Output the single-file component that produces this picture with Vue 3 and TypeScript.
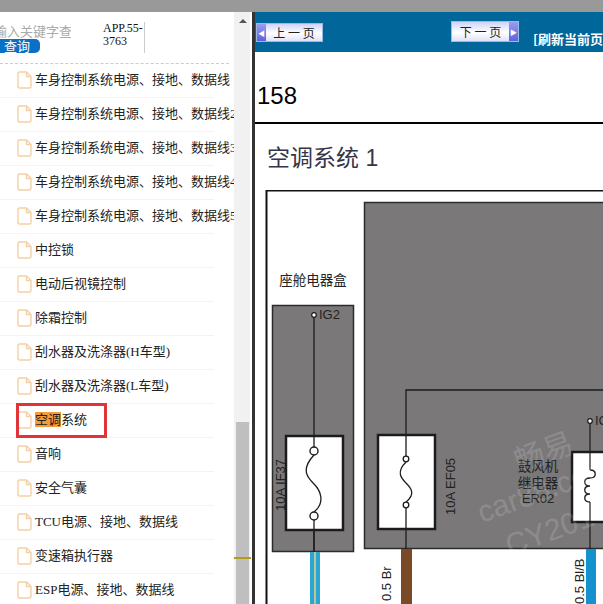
<script setup lang="ts">
const base = '车身控制系统电源、接地、数据线'

const items: string[] = [
  base,
  base + '2',
  base + '3',
  base + '4',
  base + '5',
  '中控锁',
  '电动后视镜控制',
  '除霜控制',
  '刮水器及洗涤器(H车型)',
  '刮水器及洗涤器(L车型)',
  '空调系统',
  '音响',
  '安全气囊',
  'TCU电源、接地、数据线',
  '变速箱执行器',
  'ESP电源、接地、数据线'
]
</script>

<template>
  <div class="screen">
    <div class="topbar"></div>
    <div class="main">
      <aside class="sidebar">
        <div class="search">
          <div class="search-left">
            <input class="keyword" placeholder="请输入关键字查询" />
            <button class="query">查询</button>
          </div>
          <div class="code">APP.55-3763</div>
        </div>
        <ul class="tree">
          <li v-for="item in items" :key="item" class="row">
            <svg class="file" width="15" height="18" viewBox="0 0 15 18">
              <path d="M1 2.500q0-1.500 1.500-1.500h7l4.500 4.500v10q0 1.500-1.500 1.500h-10q-1.500 0-1.500-1.500zM9.500 1v4.500h4.500" fill="#fff" stroke="#f5d0a4" stroke-width="1.400" />
            </svg>
            <span v-if="item === '空调系统'" class="label"><em class="hit">空调</em>系统</span>
            <span v-else class="label">{{ item }}</span>
            <i v-if="item === '空调系统'" class="mark"></i>
          </li>
        </ul>
      </aside>

      <div class="scrollbar">
        <span class="arrow"></span>
        <span class="thumb"></span>
        <span class="tick"></span>
      </div>
      <div class="divider"></div>

      <section class="content">
        <header class="toolbar">
          <button class="page-btn prev"><b class="cap">&#9664;</b><span>上 一 页</span></button>
          <button class="page-btn next"><span>下 一 页</span><b class="cap">&#9654;</b></button>
          <span class="refresh">[刷新当前页]</span>
        </header>
        <div class="page-no">158</div>
        <h1 class="title">空调系统 1</h1>

        <svg class="diagram" width="348" height="414" viewBox="255 190 348 414">
          <rect x="266.500" y="190.500" width="400" height="500" fill="#fff" stroke="#111" stroke-width="2" />

          <rect x="364.500" y="202.500" width="300" height="346" fill="#7b7879" stroke="#2b2b2b" stroke-width="1.500" />
          <rect x="272.500" y="305.500" width="81" height="246" fill="#7b7879" stroke="#2b2b2b" stroke-width="1.500" />

          <text x="313" y="285" class="cn big" text-anchor="middle">座舱电器盒</text>

          <!-- left fuse -->
          <line x1="314" y1="315" x2="314" y2="551" stroke="#1c1c1c" stroke-width="1.300" />
          <circle cx="314" cy="315" r="2.300" fill="#fff" stroke="#1c1c1c" stroke-width="1.200" />
          <text x="319" y="319" class="en">IG2</text>
          <rect x="286" y="436" width="57" height="94" fill="#fff" stroke="#1c1c1c" stroke-width="2.500" />
          <path d="M314 455C300 470 308 478 314 484S326 502 314 512" fill="none" stroke="#1c1c1c" stroke-width="1.300" />
          <circle cx="314" cy="451" r="4" fill="#fff" stroke="#1c1c1c" stroke-width="1.400" />
          <circle cx="314" cy="516" r="4" fill="#fff" stroke="#1c1c1c" stroke-width="1.400" />
          <text transform="translate(285 511) rotate(-90)" class="en">10A IF37</text>
          <rect x="310" y="552" width="10" height="52" fill="#2ba6d3" />
          <rect x="314" y="552" width="2" height="52" fill="#b9c59c" />
          <line x1="314" y1="436" x2="314" y2="447" stroke="#1c1c1c" stroke-width="1.300" />
          <line x1="314" y1="520" x2="314" y2="552" stroke="#1c1c1c" stroke-width="1.300" />

          <!-- middle fuse -->
          <path d="M603 390H406V435" fill="none" stroke="#1c1c1c" stroke-width="1.300" />
          <rect x="378" y="435" width="57" height="94" fill="#fff" stroke="#1c1c1c" stroke-width="2.500" />
          <line x1="406" y1="435" x2="406" y2="456" stroke="#1c1c1c" stroke-width="1.300" />
          <line x1="406" y1="508" x2="406" y2="549" stroke="#1c1c1c" stroke-width="1.300" />
          <path d="M406 462C396 472 401 478 406 483S416 494 406 502" fill="none" stroke="#1c1c1c" stroke-width="1.300" />
          <circle cx="406" cy="459" r="2.800" fill="#fff" stroke="#1c1c1c" stroke-width="1.300" />
          <circle cx="406" cy="505" r="2.800" fill="#fff" stroke="#1c1c1c" stroke-width="1.300" />
          <text transform="translate(455 515) rotate(-90)" class="en pre">10A  EF05</text>
          <rect x="401" y="549" width="11" height="55" fill="#7a4a26" />
          <text transform="translate(391 601) rotate(-90)" class="en">0.5 Br</text>

          <!-- relay -->
          <line x1="590" y1="421" x2="590" y2="549" stroke="#1c1c1c" stroke-width="1.200" />
          <circle cx="590" cy="421" r="2.300" fill="#fff" stroke="#1c1c1c" stroke-width="1.200" />
          <text x="595" y="425" class="en">IG</text>
          <rect x="572" y="452" width="60" height="70" fill="#fff" stroke="#1c1c1c" stroke-width="2.500" />
          <line x1="590" y1="452" x2="590" y2="470" stroke="#1c1c1c" stroke-width="1.200" />
          <path d="M590 470c7 0 7 8 0 8c-7 0-7 8 0 8c-7 0-7 8 0 8c-7 0-7 8 0 8" fill="none" stroke="#1c1c1c" stroke-width="1.300" />
          <line x1="590" y1="502" x2="590" y2="522" stroke="#1c1c1c" stroke-width="1.200" />
          <text x="538" y="471" class="cn big" text-anchor="middle">鼓风机</text>
          <text x="538" y="488" class="cn big" text-anchor="middle">继电器</text>
          <text x="538" y="503" class="en" text-anchor="middle">ER02</text>
          <rect x="586" y="549" width="10" height="55" fill="#1592cd" />
          <text transform="translate(584 604) rotate(-90)" class="en">0.5 Bl/B</text>

          <!-- watermark -->
          <g class="watermark">
            <text transform="translate(519 472) rotate(-20)" font-size="30">畅易</text>
            <text transform="translate(482 523) rotate(-20)" font-size="30">car88.com</text>
            <text transform="translate(510 556) rotate(-20)" font-size="30">CY2014</text>
          </g>
        </svg>
      </section>
    </div>
  </div>
</template>

<style>
body {
  overflow: hidden;
}
</style>

<style scoped>
.screen {
  display: flex;
  flex-direction: column;
  width: 603px;
  height: 604px;
  overflow: hidden;
  background: #fff;
  font-family: "Liberation Serif", "Noto Sans CJK SC", serif;
}

.topbar {
  flex: none;
  height: 12px;
  background: #999;
}

.main {
  flex: 1;
  display: flex;
  min-height: 0;
}

.sidebar {
  flex: none;
  width: 234px;
  overflow: hidden;
}

.search {
  display: flex;
  height: 52px;
  padding-top: 10px;
  box-sizing: border-box;
  border-bottom: 1px dashed #ccc;
  width: 229px;
}

.search-left {
  width: 103px;
  flex: none;
}

.keyword {
  display: block;
  width: 90px;
  height: 17px;
  margin-left: -19px;
  padding: 0;
  border: 0;
  outline: 0;
  background: transparent;
  font-size: 13px;
  font-family: "Noto Sans CJK SC", sans-serif;
}

.keyword::placeholder {
  color: #aaa;
}

.query {
  display: block;
  width: 40px;
  height: 14px;
  padding: 0 6px 0 0;
  border: 0;
  border-radius: 0 5px 5px 0;
  background: #0a6fc6;
  color: #fff;
  font-size: 13px;
  line-height: 14px;
  font-family: "Noto Sans CJK SC", sans-serif;
}

.code {
  width: 41px;
  height: 31px;
  border-right: 1px solid #ccc;
  color: #111;
  font-size: 12px;
  line-height: 13px;
  word-break: break-all;
}

.tree {
  list-style: none;
  margin: 0;
  padding: 0;
}

.row {
  position: relative;
  display: flex;
  align-items: center;
  width: 214px;
  height: 34px;
  box-sizing: border-box;
  padding: 0 0 2px 17px;
  border-bottom: 1px solid #f3f3f3;
  white-space: nowrap;
}

.file {
  flex: none;
  margin-right: 3px;
}

.label {
  color: #222;
  font-size: 13px;
  line-height: 16px;
  font-family: "Liberation Serif", "Noto Sans CJK SC", serif;
}

.hit {
  font-style: normal;
  background: #f59b38;
}

.mark {
  position: absolute;
  left: 16px;
  top: -1px;
  width: 91px;
  height: 35px;
  box-sizing: border-box;
  border: 3px solid #e0343a;
}

.scrollbar {
  position: relative;
  flex: none;
  width: 16px;
  background: #f1f1f1;
}

.arrow {
  position: absolute;
  left: 5px;
  top: 7px;
  border-left: 4px solid transparent;
  border-right: 4px solid transparent;
  border-bottom: 4px solid #555;
}

.thumb {
  position: absolute;
  left: 2px;
  top: 410px;
  width: 13px;
  height: 182px;
  background: #bfbfbf;
}

.tick {
  position: absolute;
  left: 0;
  top: 545px;
  width: 17px;
  height: 2px;
  background: #b59a1c;
}

.divider {
  flex: none;
  width: 5px;
  box-sizing: border-box;
  border-left: 1px solid #fff;
  border-right: 3px solid #333;
  background: #fff;
}

.content {
  flex: 1;
  min-width: 0;
  overflow: hidden;
}

.toolbar {
  display: flex;
  align-items: center;
  height: 40px;
  padding-left: 1px;
  background: #016699;
}

.page-btn {
  flex: none;
  display: flex;
  align-items: center;
  height: 19px;
  padding: 0;
  border: 1px solid #9fb8e0;
  background: linear-gradient(#cfd4f6, #fff 55%, #dfe2fa);
  color: #222;
  font-size: 12px;
  font-family: "Noto Sans CJK SC", sans-serif;
}

.page-btn.prev {
  width: 67px;
  margin-top: 1px;
}

.page-btn.next {
  width: 68px;
  height: 21px;
  margin-left: 128px;
  margin-top: -1px;
}

.page-btn span {
  flex: 1;
  text-align: center;
  white-space: nowrap;
}

.cap {
  flex: none;
  align-self: stretch;
  display: flex;
  align-items: center;
  justify-content: center;
  width: 9px;
  background: linear-gradient(#9a9cf2, #5f62dc);
  color: #fff;
  font-size: 7px;
  font-weight: normal;
}

.refresh {
  flex: none;
  margin-left: 14px;
  margin-top: 12px;
  color: #fff;
  font-size: 13px;
  font-weight: 700;
  white-space: nowrap;
  font-family: "Noto Sans CJK SC", sans-serif;
}

.page-no {
  height: 72px;
  box-sizing: border-box;
  padding: 30px 0 0 2px;
  border-bottom: 2px solid #000;
  color: #000;
  font-size: 24px;
  line-height: 28px;
  font-family: "Liberation Sans", sans-serif;
}

.title {
  height: 66px;
  margin: 0;
  box-sizing: border-box;
  padding: 18px 0 0 12px;
  color: #35354a;
  font-size: 23px;
  font-weight: 400;
  line-height: 32px;
  font-family: "Liberation Sans", "Noto Sans CJK SC", sans-serif;
}

.diagram {
  display: block;
}

.cn {
  fill: #222;
  font-size: 12px;
  font-family: "Noto Sans CJK SC", sans-serif;
}

.big {
  font-size: 13.500px;
}

.en {
  fill: #222;
  font-size: 13px;
  font-family: "Liberation Sans", sans-serif;
}

.pre {
  white-space: pre;
}

.watermark text {
  fill: #fff;
  opacity: 0.14;
  font-family: "Liberation Sans", "Noto Sans CJK SC", sans-serif;
}
</style>
